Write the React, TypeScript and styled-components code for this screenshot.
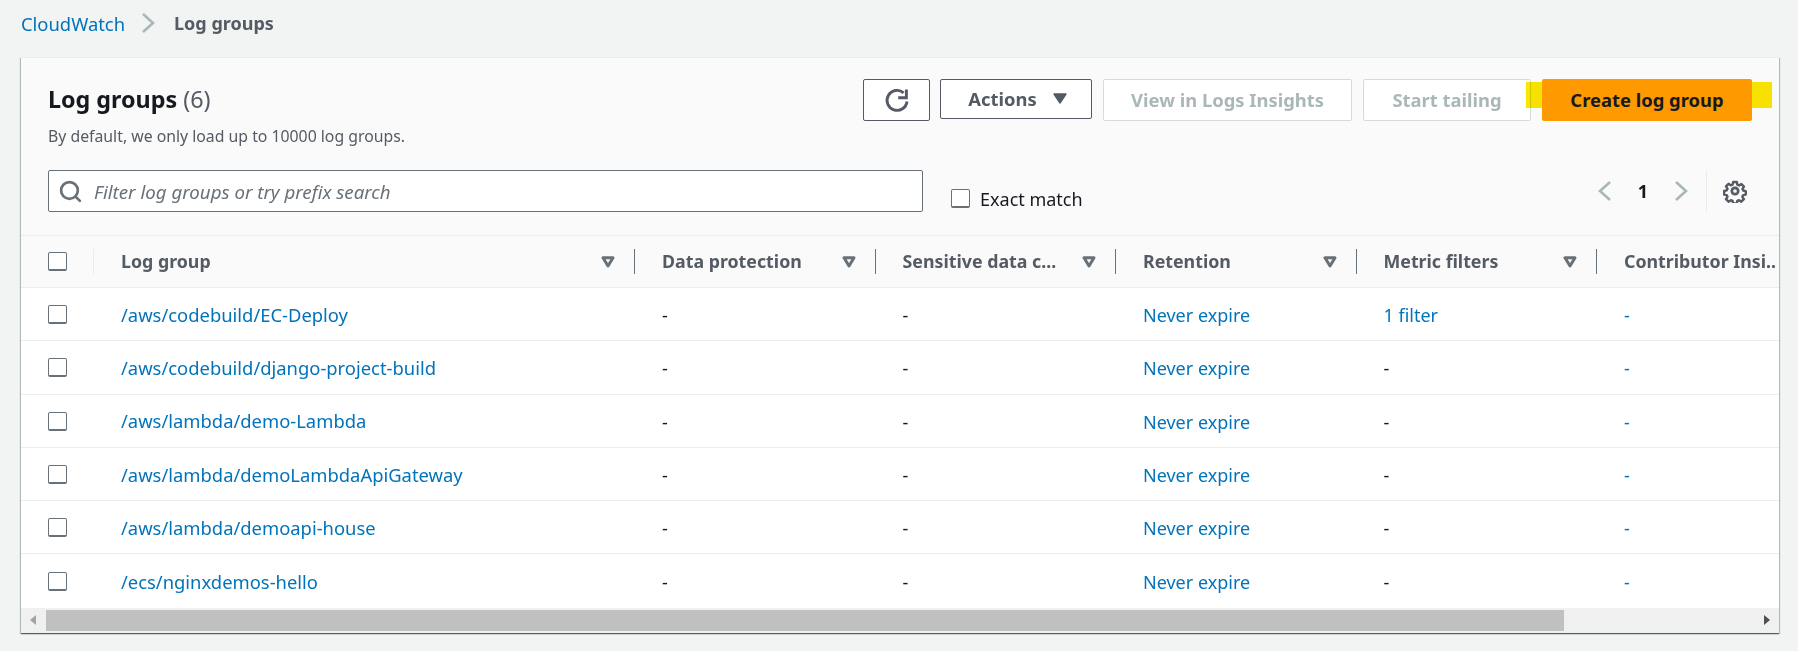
import React from "react";
import styled, { createGlobalStyle } from "styled-components";
import { Search } from "lucide-react";

const columns = [
  "Log group",
  "Data protection",
  "Sensitive data c...",
  "Retention",
  "Metric filters",
  "Contributor Insi..",
];

const rows = [
  { name: "/aws/codebuild/EC-Deploy", filters: "1 filter" },
  { name: "/aws/codebuild/django-project-build", filters: "-" },
  { name: "/aws/lambda/demo-Lambda", filters: "-" },
  { name: "/aws/lambda/demoLambdaApiGateway", filters: "-" },
  { name: "/aws/lambda/demoapi-house", filters: "-" },
  { name: "/ecs/nginxdemos-hello", filters: "-" },
];

const SortIcon = () => (
  <SortSvg viewBox="0 0 14 12">
    <path d="M2 1.8h10L7 10z" fill="none" stroke="#687078" strokeWidth="3" strokeLinejoin="round" />
  </SortSvg>
);

const Chevron = ({ right }: { right?: boolean }) => (
  <svg width="14" height="22" viewBox="0 0 14 22">
    <path
      d={right ? "M2 2l10 9-10 9" : "M12 2L2 11l10 9"}
      fill="none"
      stroke="#aab7b8"
      strokeWidth="2.6"
    />
  </svg>
);

const App = () => {
  return (
    <Page>
      <GlobalStyle />
      <Breadcrumb>
        <CrumbLink>CloudWatch</CrumbLink>
        <svg width="14" height="22" viewBox="0 0 14 22">
          <path d="M2 2l10 9-10 9" fill="none" stroke="#aab7b8" strokeWidth="2.6" />
        </svg>
        <CrumbCurrent>Log groups</CrumbCurrent>
      </Breadcrumb>
      <Panel>
        <Header>
          <TopRow>
            <div>
              <Title>
                Log groups <Count>(6)</Count>
              </Title>
              <Subtitle>By default, we only load up to 10000 log groups.</Subtitle>
            </div>
            <Actions>
              <RefreshButton aria-label="Refresh">
                <svg width="26" height="26" viewBox="0 0 26 26" fill="none" stroke="#545b64" strokeWidth="2.9">
                  <path d="M23 14.5A10 10 0 1 1 19.6 5.8" />
                  <path d="M22.4 2.5v8.3h-8.2" />
                </svg>
              </RefreshButton>
              <ActionsButton>
                Actions
                <svg width="14" height="11" viewBox="0 0 14 11">
                  <path d="M1 1h12L7 10z" fill="#545b64" stroke="#545b64" strokeWidth="1.4" strokeLinejoin="round" />
                </svg>
              </ActionsButton>
              <DisabledButton $width={249}>View in Logs Insights</DisabledButton>
              <DisabledButton $width={168}>Start tailing</DisabledButton>
              <CreateWrap>
                <Highlight />
                <CreateButton>Create log group</CreateButton>
              </CreateWrap>
            </Actions>
          </TopRow>
          <FilterRow>
            <FilterBox>
              <Search size={25} color="#687078" strokeWidth={2.6} />
              <FilterInput placeholder="Filter log groups or try prefix search" />
            </FilterBox>
            <ExactMatch>
              <Box />
              Exact match
            </ExactMatch>
            <Pagination>
              <Chevron />
              <PageNumber>1</PageNumber>
              <Chevron right />
              <Divider />
              <svg width="24" height="24" viewBox="0 0 24 24" fill="none" stroke="#545b64" strokeWidth="2.7" strokeLinejoin="round">
                <path d="M10 2.2h4l.6 2.9 1.9.8 2.5-1.6 2.8 2.8-1.6 2.5.8 1.9 2.8.6v0l0 0v3.8l-2.9.6-.8 1.9 1.6 2.5-2.8 2.8-2.5-1.6-1.9.8-.6 2.9h-4l-.6-2.9-1.9-.8-2.5 1.6-2.8-2.8 1.6-2.5-.8-1.9-2.9-.6v-4l2.9-.6.8-1.9-1.6-2.5 2.8-2.8 2.5 1.6 1.9-.8z" transform="translate(1.1 1.1) scale(.91)" />
                <circle cx="12" cy="12" r="3.2" />
              </svg>
            </Pagination>
          </FilterRow>
        </Header>
        <TableHead>
          <CheckCell $head>
            <Box />
          </CheckCell>
          {columns.map((col, i) => (
            <HeadCell key={col} $last={i === columns.length - 1}>
              <HeadLabel>{col}</HeadLabel>
              {i < columns.length - 1 && <SortIcon />}
            </HeadCell>
          ))}
        </TableHead>
        {rows.map((row) => (
          <Row key={row.name}>
            <CheckCell>
              <Box />
            </CheckCell>
            <Cell>
              <NameLink>{row.name}</NameLink>
            </Cell>
            <Cell>-</Cell>
            <Cell>-</Cell>
            <Cell>
              <Link>Never expire</Link>
            </Cell>
            <Cell>{row.filters === "-" ? "-" : <Link>{row.filters}</Link>}</Cell>
            <Cell>
              <Link>-</Link>
            </Cell>
          </Row>
        ))}
        <ScrollBar>
          <ArrowLeft />
          <Thumb />
          <ArrowRight />
        </ScrollBar>
      </Panel>
    </Page>
  );
};

export default App;

const GlobalStyle = createGlobalStyle`
  html, body {
    margin: 0;
    padding: 0;
    background: #f2f3f3;
  }
  * {
    box-sizing: border-box;
  }
  body {
    font-family: "Noto Sans", "Liberation Sans", sans-serif;
    font-size: 18px;
    color: #16191f;
  }
`;
const Page = styled.div`
  width: 1798px;
  height: 651px;
  padding: 0 19px 0 21px;
  overflow: hidden;
`;
const Breadcrumb = styled.div`
  height: 57px;
  padding-bottom: 11px;
  display: flex;
  align-items: center;
  gap: 16px;
`;
const CrumbLink = styled.span`
  color: #0073bb;
  font-size: 18.4px;
`;
const CrumbCurrent = styled.span`
  color: #545b64;
  font-weight: 700;
  margin-left: 3px;
`;
const Panel = styled.div`
  background: #fff;
  box-shadow: 0 1px 1px 0 rgba(0, 28, 36, 0.5), 1px 1px 1px 0 rgba(0, 28, 36, 0.2),
    -1px 1px 1px 0 rgba(0, 28, 36, 0.2);
  border-top: 1px solid #eaeded;
`;
const Header = styled.div`
  height: 178px;
  background: #fafafa;
  padding: 21px 27px 0;
  border-bottom: 1px solid #eaeded;
`;
const TopRow = styled.div`
  display: flex;
  justify-content: space-between;
  height: 91px;
`;
const Title = styled.h1`
  margin: 4px 0 0;
  font-size: 23.3px;
  line-height: 32px;
  font-weight: 700;
`;
const Count = styled.span`
  font-weight: 400;
  color: #545b64;
`;
const Subtitle = styled.div`
  margin-top: 11px;
  font-size: 15.8px;
  line-height: 20px;
  color: #545b64;
`;
const Actions = styled.div`
  display: flex;
  align-items: flex-start;
  gap: 11px;
`;
const BaseButton = styled.button`
  height: 42px;
  border-radius: 2px;
  font-family: inherit;
  font-size: 18.4px;
  font-weight: 700;
  display: flex;
  align-items: center;
  justify-content: center;
  padding: 0 0 2px;
`;
const RefreshButton = styled(BaseButton)`
  width: 67px;
  background: #fff;
  border: 1px solid #545b64;
  margin-right: -1px;
  padding: 0;
`;
const ActionsButton = styled(BaseButton)`
  width: 152px;
  height: 40px;
  gap: 16px;
  padding: 0 0 2px 3px;
  background: #fff;
  border: 1px solid #545b64;
  color: #545b64;
`;
const DisabledButton = styled(BaseButton)<{ $width: number }>`
  width: ${(p) => p.$width}px;
  background: #fff;
  border: 1px solid #d5dbdb;
  color: #aab7b8;
`;
const CreateWrap = styled.div`
  position: relative;
  width: 210px;
  height: 42px;
`;
const Highlight = styled.div`
  position: absolute;
  left: -16px;
  right: -20px;
  top: 3px;
  height: 26px;
  background: #fbe600;
  mix-blend-mode: multiply;
`;
const CreateButton = styled(BaseButton)`
  position: relative;
  width: 100%;
  background: #ff9900;
  border: none;
  color: #16191f;
`;
const FilterRow = styled.div`
  display: flex;
  align-items: flex-start;
`;
const FilterBox = styled.div`
  width: 875px;
  height: 42px;
  display: flex;
  align-items: center;
  gap: 9px;
  padding-left: 9px;
  background: #fff;
  border: 1px solid #687078;
  border-radius: 2px;
`;
const FilterInput = styled.input`
  flex: 1;
  border: none;
  outline: none;
  background: transparent;
  font-family: inherit;
  font-size: 18.7px;
  font-style: italic;
  padding-top: 2px;
  &::placeholder {
    color: #687078;
    opacity: 1;
  }
`;
const Box = styled.span`
  display: block;
  width: 19px;
  height: 19px;
  background: #fff;
  border: 1px solid #687078;
  border-bottom-width: 2px;
  border-radius: 2px;
  flex: none;
`;
const ExactMatch = styled.label`
  display: flex;
  align-items: center;
  gap: 10px;
  margin: 19px 0 0 28px;
  height: 19px;
`;
const Pagination = styled.div`
  margin-left: auto;
  padding-right: 5px;
  height: 42px;
  display: flex;
  align-items: center;
`;
const PageNumber = styled.span`
  width: 62px;
  text-align: center;
  font-weight: 700;
`;
const Divider = styled.span`
  width: 1px;
  height: 42px;
  background: #eaeded;
  margin: 0 16px 0 18px;
`;
const tableColumns = "73px 541px repeat(4, 240.5px) 182px";
const TableHead = styled.div`
  display: grid;
  grid-template-columns: ${tableColumns};
  height: 52px;
  background: #fafafa;
  border-bottom: 1px solid #eaeded;
`;
const Row = styled.div`
  display: grid;
  grid-template-columns: ${tableColumns};
  height: 53.3px;
  border-bottom: 1px solid #eaeded;
  overflow: hidden;
  &:nth-last-child(2) {
    border-bottom: none;
  }
`;
const CheckCell = styled.div<{ $head?: boolean }>`
  display: flex;
  align-items: center;
  padding: ${(p) => (p.$head ? "0" : "1px")} 0 0 27px;
  border-right: ${(p) => (p.$head ? "1px solid #eaeded" : "none")};
  margin: ${(p) => (p.$head ? "13px 0" : "0")};
`;
const HeadCell = styled.div<{ $last?: boolean }>`
  display: flex;
  align-items: center;
  justify-content: space-between;
  margin: 13px 0;
  padding: 0 ${(p) => (p.$last ? "0" : "19px")} 0 27px;
  border-right: ${(p) => (p.$last ? "none" : "1px solid #687078")};
  overflow: hidden;
`;
const HeadLabel = styled.span`
  font-size: 17.8px;
  font-weight: 700;
  color: #545b64;
  white-space: nowrap;
  margin-top: -2px;
`;
const SortSvg = styled.svg`
  width: 14px;
  height: 12px;
  flex: none;
`;
const Cell = styled.div`
  display: flex;
  align-items: center;
  padding: 2px 0 0 27px;
  white-space: nowrap;
`;
const Link = styled.a`
  color: #0073bb;
`;
const NameLink = styled(Link)`
  font-size: 18.4px;
  margin-top: -2px;
`;
const ScrollBar = styled.div`
  height: 25px;
  background: #f0f0f0;
  display: flex;
  align-items: center;
`;
const ArrowLeft = styled.span`
  width: 0;
  height: 0;
  margin: 0 10px 0 9px;
  border-style: solid;
  border-width: 5.5px 6px 5.5px 0;
  border-color: transparent #a3a3a3 transparent transparent;
`;
const Thumb = styled.div`
  width: 1518px;
  height: 21px;
  background: #c0c0c0;
`;
const ArrowRight = styled.span`
  width: 0;
  height: 0;
  margin-left: 200px;
  border-style: solid;
  border-width: 5.5px 0 5.5px 6px;
  border-color: transparent transparent transparent #505050;
`;
